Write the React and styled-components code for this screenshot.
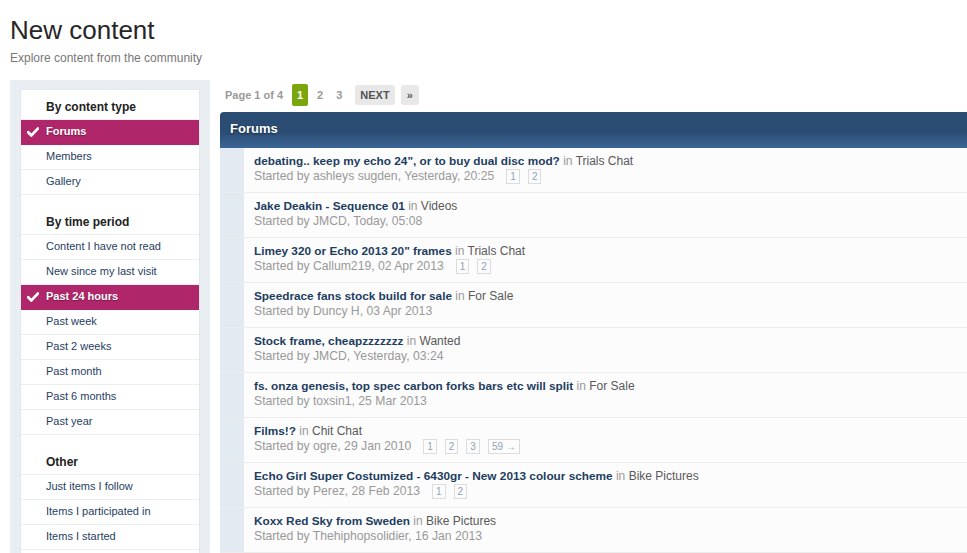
import React from "react";
import styled, { createGlobalStyle } from "styled-components";

const GlobalStyle = createGlobalStyle`
  html, body {
    margin: 0;
    padding: 0;
    background: #fff;
    font-family: "Liberation Sans", Arial, sans-serif;
    overflow: hidden;
  }
`;

const filterGroups = [
  {
    title: "By content type",
    items: [
      { label: "Forums", active: true },
      { label: "Members" },
      { label: "Gallery" },
    ],
  },
  {
    title: "By time period",
    items: [
      { label: "Content I have not read" },
      { label: "New since my last visit" },
      { label: "Past 24 hours", active: true },
      { label: "Past week" },
      { label: "Past 2 weeks" },
      { label: "Past month" },
      { label: "Past 6 months" },
      { label: "Past year" },
    ],
  },
  {
    title: "Other",
    items: [
      { label: "Just items I follow" },
      { label: "Items I participated in" },
      { label: "Items I started" },
    ],
  },
];

const topics = [
  {
    title: 'debating.. keep my echo 24", or to buy dual disc mod?',
    forum: "Trials Chat",
    meta: "Started by ashleys sugden, Yesterday, 20:25",
    pages: ["1", "2"],
  },
  {
    title: "Jake Deakin - Sequence 01",
    forum: "Videos",
    meta: "Started by JMCD, Today, 05:08",
  },
  {
    title: 'Limey 320 or Echo 2013 20" frames',
    forum: "Trials Chat",
    meta: "Started by Callum219, 02 Apr 2013",
    pages: ["1", "2"],
  },
  {
    title: "Speedrace fans stock build for sale",
    forum: "For Sale",
    meta: "Started by Duncy H, 03 Apr 2013",
  },
  {
    title: "Stock frame, cheapzzzzzzz",
    forum: "Wanted",
    meta: "Started by JMCD, Yesterday, 03:24",
  },
  {
    title: "fs. onza genesis, top spec carbon forks bars etc will split",
    forum: "For Sale",
    meta: "Started by toxsin1, 25 Mar 2013",
  },
  {
    title: "Films!?",
    forum: "Chit Chat",
    meta: "Started by ogre, 29 Jan 2010",
    pages: ["1", "2", "3", "59 \u2192"],
  },
  {
    title: "Echo Girl Super Costumized - 6430gr - New 2013 colour scheme",
    forum: "Bike Pictures",
    meta: "Started by Perez, 28 Feb 2013",
    pages: ["1", "2"],
  },
  {
    title: "Koxx Red Sky from Sweden",
    forum: "Bike Pictures",
    meta: "Started by Thehiphopsolidier, 16 Jan 2013",
  },
];

const Check = () => (
  <svg width="12" height="10" viewBox="0 0 12 10">
    <path
      d="M1.2 5.2 L4.4 8.4 L10.8 1.6"
      fill="none"
      stroke="#fff"
      strokeWidth="2.8"
      strokeLinecap="round"
      strokeLinejoin="round"
    />
  </svg>
);

export default function App() {
  return (
    <>
      <GlobalStyle />
      <Page>
        <Header>
          <Title>New content</Title>
          <Subtitle>Explore content from the community</Subtitle>
        </Header>
        <Layout>
          <Sidebar>
            <FilterBox>
              {filterGroups.map((group, gi) => (
                <React.Fragment key={group.title}>
                  <GroupTitle $first={gi === 0}>{group.title}</GroupTitle>
                  {group.items.map((item) => (
                    <FilterItem key={item.label} $active={item.active}>
                      {item.active && (
                        <CheckSpot>
                          <Check />
                        </CheckSpot>
                      )}
                      {item.label}
                    </FilterItem>
                  ))}
                </React.Fragment>
              ))}
            </FilterBox>
          </Sidebar>

          <Main>
            <Pagination>
              <PageInfo>Page 1 of 4</PageInfo>
              <CurrentPage>1</CurrentPage>
              <PageNum>2</PageNum>
              <PageNum>3</PageNum>
              <PageButton>NEXT</PageButton>
              <PageButton $small>&raquo;</PageButton>
            </Pagination>

            <Panel>
              <PanelHeader>Forums</PanelHeader>
              {topics.map((t) => (
                <TopicRow key={t.title}>
                  <Stripe />
                  <TopicBody>
                    <TopicLine>
                      <TopicTitle>{t.title}</TopicTitle>
                      <InWord> in </InWord>
                      <ForumName>{t.forum}</ForumName>
                    </TopicLine>
                    <MetaLine>
                      {t.meta}
                      {t.pages && (
                        <MiniPages>
                          {t.pages.map((p) => (
                            <MiniPage key={p}>{p}</MiniPage>
                          ))}
                        </MiniPages>
                      )}
                    </MetaLine>
                  </TopicBody>
                </TopicRow>
              ))}
            </Panel>
          </Main>
        </Layout>
      </Page>
    </>
  );
}

const Page = styled.div`
  padding: 14px 0 0 10px;
  height: 553px;
  box-sizing: border-box;
  overflow: hidden;
`;

const Header = styled.div`
  margin-bottom: 14px;
`;

const Title = styled.h1`
  margin: 0;
  font-size: 26px;
  line-height: 32px;
  font-weight: normal;
  color: #262626;
`;

const Subtitle = styled.p`
  margin: 4px 0 0;
  font-size: 12px;
  line-height: 16px;
  color: #777;
`;

const Layout = styled.div`
  display: flex;
  align-items: flex-start;
`;

const Sidebar = styled.div`
  width: 200px;
  flex-shrink: 0;
  background: #e9eef2;
  padding: 9px 10px 0;
  box-sizing: border-box;
  height: 600px;
`;

const FilterBox = styled.div`
  background: #fff;
  border: 1px solid #dfe6ec;
  border-top-color: #e4eaef;
  padding-bottom: 30px;
`;

const GroupTitle = styled.div`
  padding: ${(p) => (p.$first ? "10px" : "20px")} 10px
    ${(p) => (p.$first ? "5px" : "5px")} 25px;
  font-size: 12px;
  line-height: 14px;
  font-weight: bold;
  color: #222;
  border-bottom: 1px solid #e9eef2;
`;

const FilterItem = styled.div`
  position: relative;
  height: 24px;
  line-height: 23px;
  padding-left: 25px;
  font-size: 11px;
  border-bottom: 1px solid ${(p) => (p.$active ? "#b0266a" : "#e9eef2")};
  background: ${(p) => (p.$active ? "#b0266a" : "#fff")};
  color: ${(p) => (p.$active ? "#fff" : "#1f3e63")};
  font-weight: ${(p) => (p.$active ? "bold" : "normal")};
  text-shadow: ${(p) => (p.$active ? "0 1px 1px rgba(0,0,0,0.35)" : "none")};
`;

const CheckSpot = styled.span`
  position: absolute;
  left: 6px;
  top: 7px;
  line-height: 0;
`;

const Main = styled.div`
  flex: 1;
  margin-left: 10px;
  min-width: 0;
`;

const Pagination = styled.div`
  display: flex;
  align-items: center;
  height: 22px;
  margin-top: 4px;
  margin-bottom: 6px;
  padding-left: 5px;
`;

const PageInfo = styled.span`
  font-size: 11px;
  font-weight: bold;
  color: #999;
  margin-right: 9px;
`;

const CurrentPage = styled.span`
  display: inline-flex;
  align-items: center;
  justify-content: center;
  width: 16px;
  height: 22px;
  margin-right: 4px;
  border-radius: 2px;
  background: #7ba60d;
  color: #fff;
  font-size: 11px;
  font-weight: bold;
`;

const PageNum = styled.span`
  padding: 0 5px;
  margin-right: 3px;
  color: #999;
  font-size: 11px;
  font-weight: bold;
`;

const PageButton = styled.span`
  display: inline-flex;
  align-items: center;
  justify-content: center;
  height: 20px;
  padding: 0 ${(p) => (p.$small ? "6px" : "5px")};
  margin-left: ${(p) => (p.$small ? "6px" : "5px")};
  border-radius: 3px;
  background: #e8e8e8;
  color: #555;
  font-size: 11px;
  font-weight: bold;
`;

const Panel = styled.div`
  background: #fcfcfc;
`;

const PanelHeader = styled.div`
  height: 36px;
  line-height: 34px;
  padding-left: 10px;
  border-radius: 4px 0 0 0;
  background: linear-gradient(to bottom, #2a4b72 0%, #2b4c73 55%, #3a6595 100%);
  color: #fff;
  font-size: 13px;
  font-weight: bold;
  text-shadow: 0 1px 2px rgba(0, 0, 0, 0.5);
`;

const TopicRow = styled.div`
  display: flex;
  height: 45px;
  border-bottom: 1px solid #ececec;
  box-sizing: border-box;
`;

const Stripe = styled.div`
  width: 24px;
  flex-shrink: 0;
  background: #e4eaf2;
`;

const TopicBody = styled.div`
  padding: 6px 0 0 10px;
  white-space: nowrap;
`;

const TopicLine = styled.div`
  font-size: 12px;
  line-height: 15px;
`;

const TopicTitle = styled.span`
  font-weight: bold;
  font-size: 11.8px;
  color: #1c3d61;
`;

const InWord = styled.span`
  color: #999;
`;

const ForumName = styled.span`
  color: #595959;
`;

const MetaLine = styled.div`
  display: flex;
  align-items: center;
  font-size: 12.2px;
  line-height: 15px;
  color: #999;
`;

const MiniPages = styled.span`
  display: inline-flex;
  gap: 8px;
  margin-left: 12px;
`;

const MiniPage = styled.span`
  display: inline-block;
  min-width: 13px;
  height: 15px;
  line-height: 13px;
  padding: 0 3px;
  box-sizing: border-box;
  border: 1px solid #dcdcdc;
  font-size: 10px;
  color: #8fa2b8;
  text-align: center;
`;
